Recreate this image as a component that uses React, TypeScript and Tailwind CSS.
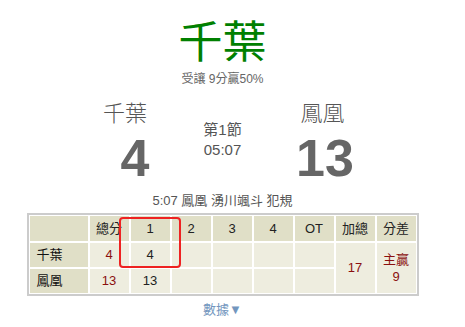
import React from "react"

const font = {
  fontFamily: '"Liberation Sans", "Noto Sans CJK TC", sans-serif',
}

const quarters = ["1", "2", "3", "4", "OT"]

function HeadCell({ children }: { children?: React.ReactNode }) {
  return (
    <div className="flex items-center justify-center bg-[#e0dfc7] text-[13px] text-[#222]">
      {children}
    </div>
  )
}

function Cell({
  children,
  className = "",
}: {
  children?: React.ReactNode
  className?: string
}) {
  return (
    <div
      className={`flex items-center justify-center bg-[#eeeddf] text-[13px] ${className}`}
    >
      {children}
    </div>
  )
}

function BoxScore() {
  return (
    <div className="relative mx-auto mt-[6px] w-[392px]">
      <div className="grid grid-cols-[58px_repeat(8,1fr)] grid-rows-[25px_24px_24px] gap-[2px] border-2 border-[#cccccc] bg-white p-[1px]">
        <HeadCell />
        <HeadCell>總分</HeadCell>
        {quarters.map((q) => (
          <HeadCell key={q}>{q}</HeadCell>
        ))}
        <HeadCell>加總</HeadCell>
        <HeadCell>分差</HeadCell>

        {/* 千葉 */}
        <div className="flex items-center pl-[7px] bg-[#e0dfc7] text-[13px] text-[#111]">
          千葉
        </div>
        <Cell className="text-[#8b1010]">4</Cell>
        <Cell className="text-[#222]">4</Cell>
        <Cell />
        <Cell />
        <Cell />
        <Cell />
        <Cell className="row-span-2 text-[#8b1010]">17</Cell>
        <Cell className="row-span-2 flex-col leading-[17px] text-[#8b1010]">
          <span>主贏</span>
          <span>9</span>
        </Cell>

        {/* 鳳凰 */}
        <div className="flex items-center pl-[7px] bg-[#e0dfc7] text-[13px] text-[#111]">
          鳳凰
        </div>
        <Cell className="text-[#8b1010]">13</Cell>
        <Cell className="text-[#222]">13</Cell>
        <Cell />
        <Cell />
        <Cell />
        <Cell />
      </div>

      {/* highlight */}
      <div className="pointer-events-none absolute left-[92px] top-[4px] h-[51px] w-[62px] rounded-[4px] border-2 border-[#ee2222]" />
    </div>
  )
}

export default function App() {
  return (
    <div className="w-[445px] bg-white text-center" style={font}>
      <div className="pt-[21px] text-[44px] leading-[44px] text-[#008000]">千葉</div>
      <div className="mt-[8px] text-[12px] leading-[12px] text-[#666]">
        受讓 9分贏50%
      </div>

      <div className="mt-[18px] flex pl-[75px]">
        <div className="flex w-[110px] flex-col items-center">
          <div className="pr-[10px] text-[22px] font-light leading-[22px] text-[#555]">千葉</div>
          <div className="mt-[7px] pl-[10px] text-[52px] font-bold leading-[52px] text-[#666]">
            4
          </div>
        </div>
        <div className="flex w-[75px] flex-col items-center pt-[19px] text-[15px] leading-[15px] text-[#555]">
          <div>第1節</div>
          <div className="mt-[5px]">05:07</div>
        </div>
        <div className="flex w-[125px] flex-col items-center">
          <div className="text-[22px] font-light leading-[22px] text-[#555]">鳳凰</div>
          <div className="mt-[7px] pl-[5px] text-[52px] font-bold leading-[52px] text-[#666]">
            13
          </div>
        </div>
      </div>

      <div className="mt-[10px] text-[13px] leading-[13px] text-[#555]">
        5:07 鳳凰 湧川颯斗 犯規
      </div>

      <BoxScore />

      <div className="mt-[7px] text-[13px] leading-[13px] text-[#7396be]">數據▼</div>
    </div>
  )
}
